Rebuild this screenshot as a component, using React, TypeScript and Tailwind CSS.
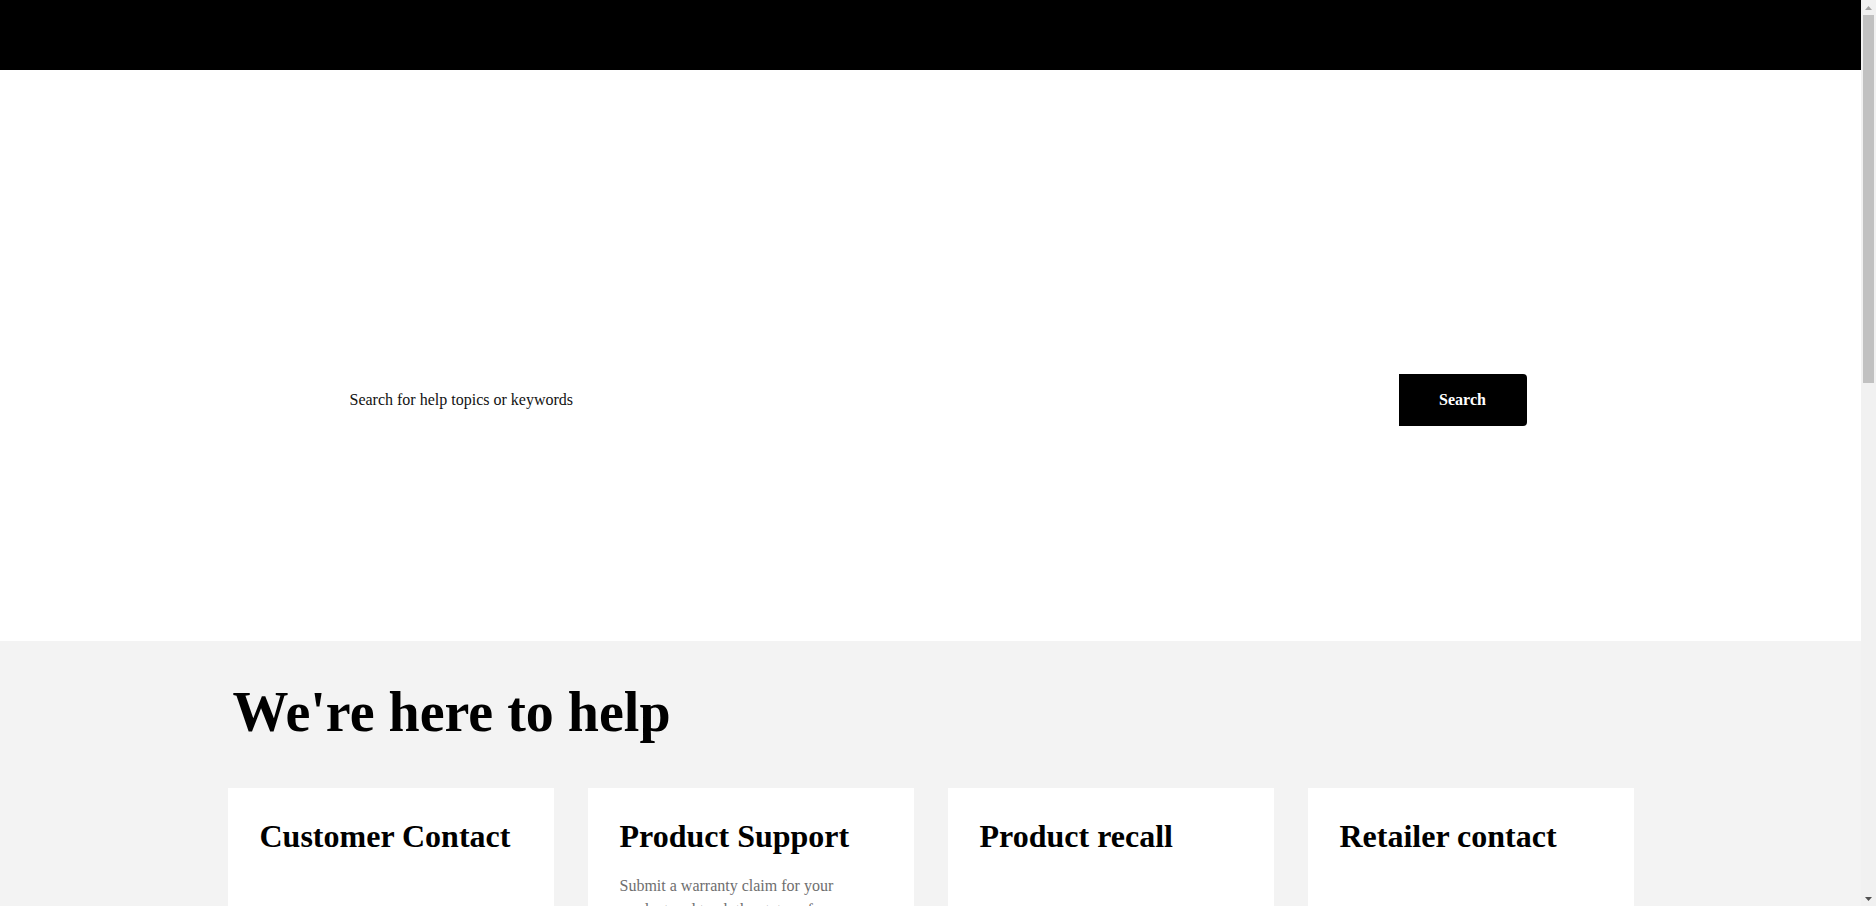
import React from "react";

const cards = [
  {
    title: "Customer Contact",
    desc: "Get in touch with our customer care team.",
    offset: "mt-[72px]",
  },
  {
    title: "Product Support",
    desc: "Submit a warranty claim for your product and track the status of your request online.",
    offset: "mt-[19px]",
  },
  {
    title: "Product recall",
    desc: "Find out whether your product is affected by a recall.",
    offset: "mt-[48px]",
  },
  {
    title: "Retailer contact",
    desc: "Are you a retailer? Contact our trade team here.",
    offset: "mt-[48px]",
  },
];

const topics = [
  "Orders and delivery",
  "Returns and refunds",
  "Warranty and repairs",
  "Spare parts and accessories",
  "Manuals and downloads",
  "Product registration",
];

function FakeScrollbar() {
  return (
    <div className="sticky top-0 flex h-screen w-[15px] shrink-0 flex-col items-center bg-[#f1f1f1]">
      <div className="flex h-[15px] w-full items-center justify-center">
        <svg width="7" height="4" viewBox="0 0 7 4">
          <polygon points="3.5,0 7,4 0,4" fill="#a3a3a3" />
        </svg>
      </div>
      <div className="h-[368px] w-[11px] bg-[#c1c1c1]" />
      <div className="flex-1" />
      <div className="flex h-[15px] w-full items-center justify-center">
        <svg width="7" height="4" viewBox="0 0 7 4">
          <polygon points="0,0 7,0 3.5,4" fill="#505050" />
        </svg>
      </div>
    </div>
  );
}

export default function App() {
  return (
    <div
      className="flex items-start bg-[#f3f3f3] text-black"
      style={{ fontFamily: '"Liberation Serif", "Times New Roman", serif' }}
    >
      <div className="min-w-0 flex-1">
        <header className="h-[70px] bg-black" />

        <section className="h-[571px] bg-white pt-[304px]">
          <form
            className="mx-auto flex h-[52px] w-[1192px] items-stretch"
            onSubmit={(e) => e.preventDefault()}
          >
            <input
              type="text"
              placeholder="Search for help topics or keywords"
              className="flex-1 bg-white pl-[15px] text-[16px] text-black outline-none placeholder:text-[#111111]"
            />
            <button
              type="submit"
              className="w-[128px] rounded-r-[4px] bg-black text-[16px] font-bold text-white"
            >
              Search
            </button>
          </form>
        </section>

        <section className="bg-[#f3f3f3] pb-[120px] pt-[39px]">
          <div className="mx-auto w-[1406px]">
            <h1 className="ml-[5px] text-[56px] font-bold leading-[1.15]">We're here to help</h1>
            <div className="mt-[44px] grid grid-cols-4 gap-[34px]">
              {cards.map((c) => (
                <div key={c.title} className="flex h-[300px] flex-col bg-white px-[32px] pt-[30px]">
                  <h2 className="text-[32px] font-bold leading-[1.15]">{c.title}</h2>
                  <p className={`${c.offset} text-[16px] leading-[24px] text-[#6e6e6e]`}>{c.desc}</p>
                </div>
              ))}
            </div>

            <h2 className="ml-[5px] mt-[120px] text-[40px] font-bold leading-[1.15]">Popular topics</h2>
            <div className="mt-[40px] grid grid-cols-3 gap-[34px]">
              {topics.map((t) => (
                <div key={t} className="h-[220px] bg-white p-[32px]">
                  <h3 className="text-[24px] font-bold">{t}</h3>
                  <p className="mt-[16px] text-[16px] leading-[24px] text-[#6e6e6e]">
                    Answers to the most common questions about {t.toLowerCase()}.
                  </p>
                </div>
              ))}
            </div>

            <h2 className="ml-[5px] mt-[120px] text-[40px] font-bold leading-[1.15]">Still need help?</h2>
            <div className="mt-[40px] grid grid-cols-2 gap-[34px]">
              <div className="h-[360px] bg-white p-[32px]">
                <h3 className="text-[28px] font-bold">Call us</h3>
                <p className="mt-[16px] text-[16px] leading-[24px] text-[#6e6e6e]">Monday to Friday, 8am to 6pm.</p>
              </div>
              <div className="h-[360px] bg-white p-[32px]">
                <h3 className="text-[28px] font-bold">Write to us</h3>
                <p className="mt-[16px] text-[16px] leading-[24px] text-[#6e6e6e]">We reply within two working days.</p>
              </div>
            </div>
          </div>
        </section>

        <footer className="h-[1000px] bg-black px-[227px] pt-[80px] text-white">
          <p className="text-[16px]">© All rights reserved</p>
        </footer>
      </div>
      <FakeScrollbar />
    </div>
  );
}
